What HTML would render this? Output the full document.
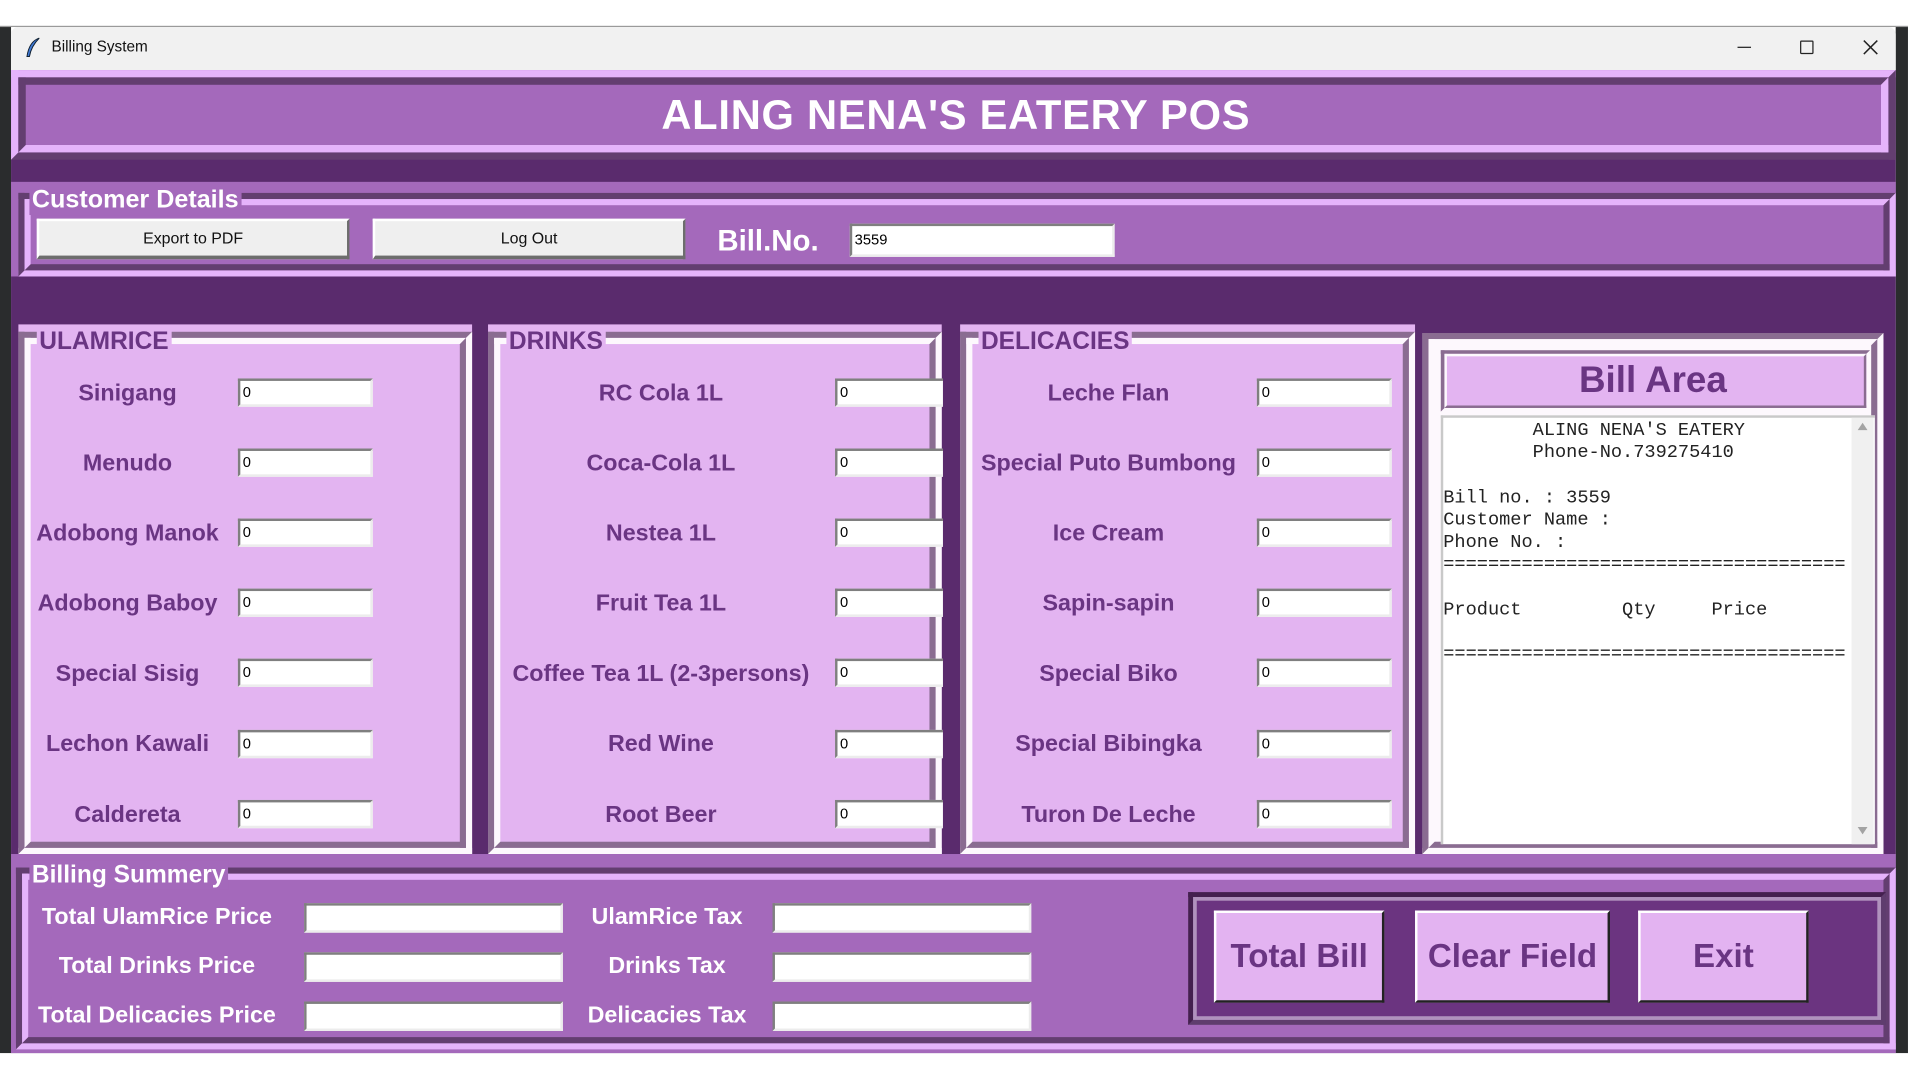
<!DOCTYPE html>
<html><head><meta charset="utf-8">
<style>
*{margin:0;padding:0;box-sizing:border-box}
html,body{width:1920px;height:1080px;overflow:hidden;background:#fff}
#s{position:absolute;left:0;top:0;width:1563px;height:879px;transform:scale(1.2262,1.2288);transform-origin:0 0;font-family:"Liberation Sans",Arial,sans-serif}
.a{position:absolute}
.b{font-weight:bold}
.g1{position:absolute;border-style:solid;border-width:5px}
.ent{position:absolute;background:#fff;border-top:2px solid #7f7f7f;border-left:2px solid #7f7f7f;border-bottom:2px solid #ececec;border-right:2px solid #ececec;font-size:12px;line-height:18px;padding-left:2px;color:#000;overflow:hidden}
.lbl{position:absolute;color:#6a3583;font-weight:bold;font-size:19px;text-align:center;white-space:nowrap;transform:translate(-50%,-50%)}
.wl{position:absolute;color:#fff;font-weight:bold;font-size:19px;white-space:nowrap;transform:translate(-50%,-50%)}
.btn{position:absolute;background:#efefef;border-top:2px solid #fff;border-left:2px solid #fff;border-right:2px solid #6d6d6d;border-bottom:3px solid #6d6d6d;font-size:13px;text-align:center;color:#111}
.pb{position:absolute;background:#e3b3f1;border-top:2px solid #fff;border-left:2px solid #fff;border-right:2px solid #222;border-bottom:2px solid #222;color:#6a3583;font-weight:bold;font-size:27px;text-align:center;line-height:70px}
.mono{font-family:"Liberation Mono","Courier New",monospace;font-size:15.2px;line-height:18.2px;white-space:pre;color:#222}
</style></head><body>
<div id="s">
<div class="a" style="left:0;top:22px;width:9px;height:835px;background:#2a2c2d"></div>
<div class="a" style="left:1546px;top:22px;width:10px;height:835px;background:#2a2c2d"></div>
<div class="a" style="left:0;top:21px;width:1556px;height:1px;background:#9a9a9a"></div>
<div class="a" style="left:9px;top:22px;width:1537px;height:35px;background:#f1f1f1;border-radius:6px 6px 0 0"></div>
<svg class="a" style="left:20px;top:30px" width="14" height="18" viewBox="0 0 14 18"><path d="M12 1 C6 3 3 9 2 16 L4 16 C5 10 8 5 12 1Z" fill="#3f7ad8" stroke="#123" stroke-width="0.8"/></svg>
<div class="a" style="left:42px;top:31px;font-size:12.5px;color:#111">Billing System</div>
<div class="a" style="left:1417px;top:38px;width:11px;height:1px;background:#222"></div>
<div class="a" style="left:1468px;top:33px;width:11px;height:11px;border:1.2px solid #222;border-radius:1px"></div>
<svg class="a" style="left:1519px;top:32px" width="13" height="13"><path d="M1 1L12 12M12 1L1 12" stroke="#222" stroke-width="1.2"/></svg>
<div class="a" style="left:9px;top:57px;width:1537px;height:800px;background:#5a2b6d"></div>
<div class="g1" style="left:9px;top:57px;width:1537px;height:73px;border-width:6px;border-color:#e5b3fb #633e70 #633e70 #e5b3fb"></div>
<div class="g1" style="left:15px;top:63px;width:1525px;height:61px;border-width:6px;border-color:#633e70 #e5b3fb #e5b3fb #633e70;background:#a469bb"></div>
<div class="a b" style="left:0;width:1563px;top:74px;text-align:center;font-size:34px;letter-spacing:0.6px;color:#fff;line-height:40px;padding-right:4px">ALING NENA'S EATERY POS</div>
<div class="a" style="left:9px;top:148px;width:1537px;height:77px;background:#a469bb"></div>
<div class="g1" style="left:15px;top:157px;width:1531px;height:68px;border-color:#633e70 #e5b3fb #e5b3fb #633e70"></div>
<div class="g1" style="left:20px;top:162px;width:1521px;height:58px;border-color:#e5b3fb #633e70 #633e70 #e5b3fb"></div>
<div class="a b" style="left:24px;top:151px;padding:0 2px;background:#a469bb;color:#fff;font-size:20.5px;line-height:24px">Customer Details</div>
<div class="btn" style="left:30px;top:178px;width:255px;height:33px;line-height:28px">Export to PDF</div>
<div class="btn" style="left:304px;top:178px;width:255px;height:33px;line-height:28px">Log Out</div>
<div class="a b" style="left:585px;top:183px;color:#fff;font-size:24px;line-height:28px">Bill.No.</div>
<div class="ent" style="left:693px;top:182px;width:216px;height:27px;line-height:23px">3559</div>
<div class="a" style="left:15px;top:264px;width:370px;height:431px;background:#e3b4f1"></div>
<div class="a" style="left:398px;top:264px;width:370px;height:431px;background:#e3b4f1"></div>
<div class="a" style="left:783px;top:264px;width:371px;height:431px;background:#e3b4f1"></div>
<div class="g1" style="left:15px;top:270px;width:370px;height:425px;border-color:#8a6c91 #fdf8fd #fdf8fd #8a6c91"></div>
<div class="g1" style="left:20px;top:275px;width:360px;height:415px;border-color:#fdf8fd #8a6c91 #8a6c91 #fdf8fd"></div>
<div class="g1" style="left:398px;top:270px;width:370px;height:425px;border-color:#8a6c91 #fdf8fd #fdf8fd #8a6c91"></div>
<div class="g1" style="left:403px;top:275px;width:360px;height:415px;border-color:#fdf8fd #8a6c91 #8a6c91 #fdf8fd"></div>
<div class="g1" style="left:783px;top:270px;width:371px;height:425px;border-color:#8a6c91 #fdf8fd #fdf8fd #8a6c91"></div>
<div class="g1" style="left:788px;top:275px;width:361px;height:415px;border-color:#fdf8fd #8a6c91 #8a6c91 #fdf8fd"></div>
<div class="a b" style="left:30px;top:266px;padding:0 2px;background:#e3b4f1;color:#6a3583;font-size:20px;line-height:24px">ULAMRICE</div>
<div class="a b" style="left:413px;top:266px;padding:0 2px;background:#e3b4f1;color:#6a3583;font-size:20px;line-height:24px">DRINKS</div>
<div class="a b" style="left:798px;top:266px;padding:0 2px;background:#e3b4f1;color:#6a3583;font-size:20px;line-height:24px">DELICACIES</div>

<div class="lbl" style="left:104px;top:321px">Sinigang</div>
<div class="lbl" style="left:104px;top:378px">Menudo</div>
<div class="lbl" style="left:104px;top:435px">Adobong Manok</div>
<div class="lbl" style="left:104px;top:492px">Adobong Baboy</div>
<div class="lbl" style="left:104px;top:549px">Special Sisig</div>
<div class="lbl" style="left:104px;top:606px">Lechon Kawali</div>
<div class="lbl" style="left:104px;top:664px">Caldereta</div>

<div class="lbl" style="left:539px;top:321px">RC Cola 1L</div>
<div class="lbl" style="left:539px;top:378px">Coca-Cola 1L</div>
<div class="lbl" style="left:539px;top:435px">Nestea 1L</div>
<div class="lbl" style="left:539px;top:492px">Fruit Tea 1L</div>
<div class="lbl" style="left:539px;top:549px">Coffee Tea 1L (2-3persons)</div>
<div class="lbl" style="left:539px;top:606px">Red Wine</div>
<div class="lbl" style="left:539px;top:664px">Root Beer</div>

<div class="lbl" style="left:904px;top:321px">Leche Flan</div>
<div class="lbl" style="left:904px;top:378px">Special Puto Bumbong</div>
<div class="lbl" style="left:904px;top:435px">Ice Cream</div>
<div class="lbl" style="left:904px;top:492px">Sapin-sapin</div>
<div class="lbl" style="left:904px;top:549px">Special Biko</div>
<div class="lbl" style="left:904px;top:606px">Special Bibingka</div>
<div class="lbl" style="left:904px;top:664px">Turon De Leche</div>

<div class="ent" style="left:194px;top:308px;width:110px;height:23px">0</div>
<div class="ent" style="left:194px;top:365px;width:110px;height:23px">0</div>
<div class="ent" style="left:194px;top:422px;width:110px;height:23px">0</div>
<div class="ent" style="left:194px;top:479px;width:110px;height:23px">0</div>
<div class="ent" style="left:194px;top:536px;width:110px;height:23px">0</div>
<div class="ent" style="left:194px;top:594px;width:110px;height:23px">0</div>
<div class="ent" style="left:194px;top:651px;width:110px;height:23px">0</div>

<div class="ent" style="left:681px;top:308px;width:88px;height:23px;border-right:none">0</div>
<div class="ent" style="left:681px;top:365px;width:88px;height:23px;border-right:none">0</div>
<div class="ent" style="left:681px;top:422px;width:88px;height:23px;border-right:none">0</div>
<div class="ent" style="left:681px;top:479px;width:88px;height:23px;border-right:none">0</div>
<div class="ent" style="left:681px;top:536px;width:88px;height:23px;border-right:none">0</div>
<div class="ent" style="left:681px;top:594px;width:88px;height:23px;border-right:none">0</div>
<div class="ent" style="left:681px;top:651px;width:88px;height:23px;border-right:none">0</div>

<div class="ent" style="left:1025px;top:308px;width:110px;height:23px">0</div>
<div class="ent" style="left:1025px;top:365px;width:110px;height:23px">0</div>
<div class="ent" style="left:1025px;top:422px;width:110px;height:23px">0</div>
<div class="ent" style="left:1025px;top:479px;width:110px;height:23px">0</div>
<div class="ent" style="left:1025px;top:536px;width:110px;height:23px">0</div>
<div class="ent" style="left:1025px;top:594px;width:110px;height:23px">0</div>
<div class="ent" style="left:1025px;top:651px;width:110px;height:23px">0</div>

<div class="g1" style="left:1160px;top:271px;width:376px;height:424px;border-color:#8a6c91 #fdf8fd #fdf8fd #8a6c91;background:#fdf8fd"></div>
<div class="g1" style="left:1165px;top:276px;width:366px;height:414px;border-color:#fdf8fd #8a6c91 #8a6c91 #fdf8fd"></div>
<div class="a" style="left:1175px;top:285px;width:350px;height:50px;border-style:solid;border-width:3px;border-color:#8a6c91 #fdf8fd #fdf8fd #8a6c91"></div>
<div class="a" style="left:1178px;top:288px;width:344px;height:44px;border-style:solid;border-width:2px;border-color:#fdf8fd #8a6c91 #8a6c91 #fdf8fd;background:#e3b4f1"></div>
<div class="a b" style="left:1176px;top:290px;width:344px;text-align:center;color:#6a3583;font-size:30px;line-height:40px">Bill Area</div>
<div class="a" style="left:1175px;top:338px;width:354px;height:349px;background:#fff;border-top:2px solid #c9c9c9;border-left:2px solid #c9c9c9"></div>
<div class="a" style="left:1510px;top:340px;width:18px;height:347px;background:#f0f0f0"></div>
<svg class="a" style="left:1514px;top:343px" width="10" height="8"><path d="M1 7L5 1L9 7Z" fill="#a3a3a3"/></svg>
<svg class="a" style="left:1514px;top:672px" width="10" height="8"><path d="M1 1L5 7L9 1Z" fill="#a3a3a3"/></svg>
<div class="a mono" style="left:1177px;top:341px">        ALING NENA'S EATERY
        Phone-No.739275410

Bill no. : 3559
Customer Name :
Phone No. :
====================================

Product         Qty     Price

====================================</div>

<div class="a" style="left:9px;top:695px;width:1537px;height:162px;background:#a469bb"></div>
<div class="g1" style="left:13px;top:706px;width:1533px;height:148px;border-color:#633e70 #e5b3fb #e5b3fb #633e70"></div>
<div class="g1" style="left:18px;top:711px;width:1523px;height:138px;border-color:#e5b3fb #633e70 #633e70 #e5b3fb"></div>
<div class="a b" style="left:24px;top:700px;padding:0 2px;background:#a469bb;color:#fff;font-size:20px;line-height:24px">Billing Summery</div>
<div class="wl" style="left:128px;top:747px">Total UlamRice Price</div>
<div class="wl" style="left:128px;top:787px">Total Drinks Price</div>
<div class="wl" style="left:128px;top:827px">Total Delicacies Price</div>
<div class="wl" style="left:544px;top:747px">UlamRice Tax</div>
<div class="wl" style="left:544px;top:787px">Drinks Tax</div>
<div class="wl" style="left:544px;top:827px">Delicacies Tax</div>
<div class="ent" style="left:248px;top:735px;width:211px;height:24px"></div>
<div class="ent" style="left:248px;top:775px;width:211px;height:24px"></div>
<div class="ent" style="left:248px;top:815px;width:211px;height:24px"></div>
<div class="ent" style="left:630px;top:735px;width:211px;height:24px"></div>
<div class="ent" style="left:630px;top:775px;width:211px;height:24px"></div>
<div class="ent" style="left:630px;top:815px;width:211px;height:24px"></div>

<div class="a" style="left:969px;top:726px;width:569px;height:108px;border-style:solid;border-width:4px;border-color:#44204f #5f3d6e #5f3d6e #44204f"></div>
<div class="a" style="left:973px;top:730px;width:561px;height:100px;border-style:solid;border-width:3px;border-color:#b092bd;background:#6b3480"></div>
<div class="pb" style="left:990px;top:741px;width:139px;height:75px">Total Bill</div>
<div class="pb" style="left:1154px;top:741px;width:159px;height:75px">Clear Field</div>
<div class="pb" style="left:1336px;top:741px;width:139px;height:75px">Exit</div>
</div>
</body></html>
